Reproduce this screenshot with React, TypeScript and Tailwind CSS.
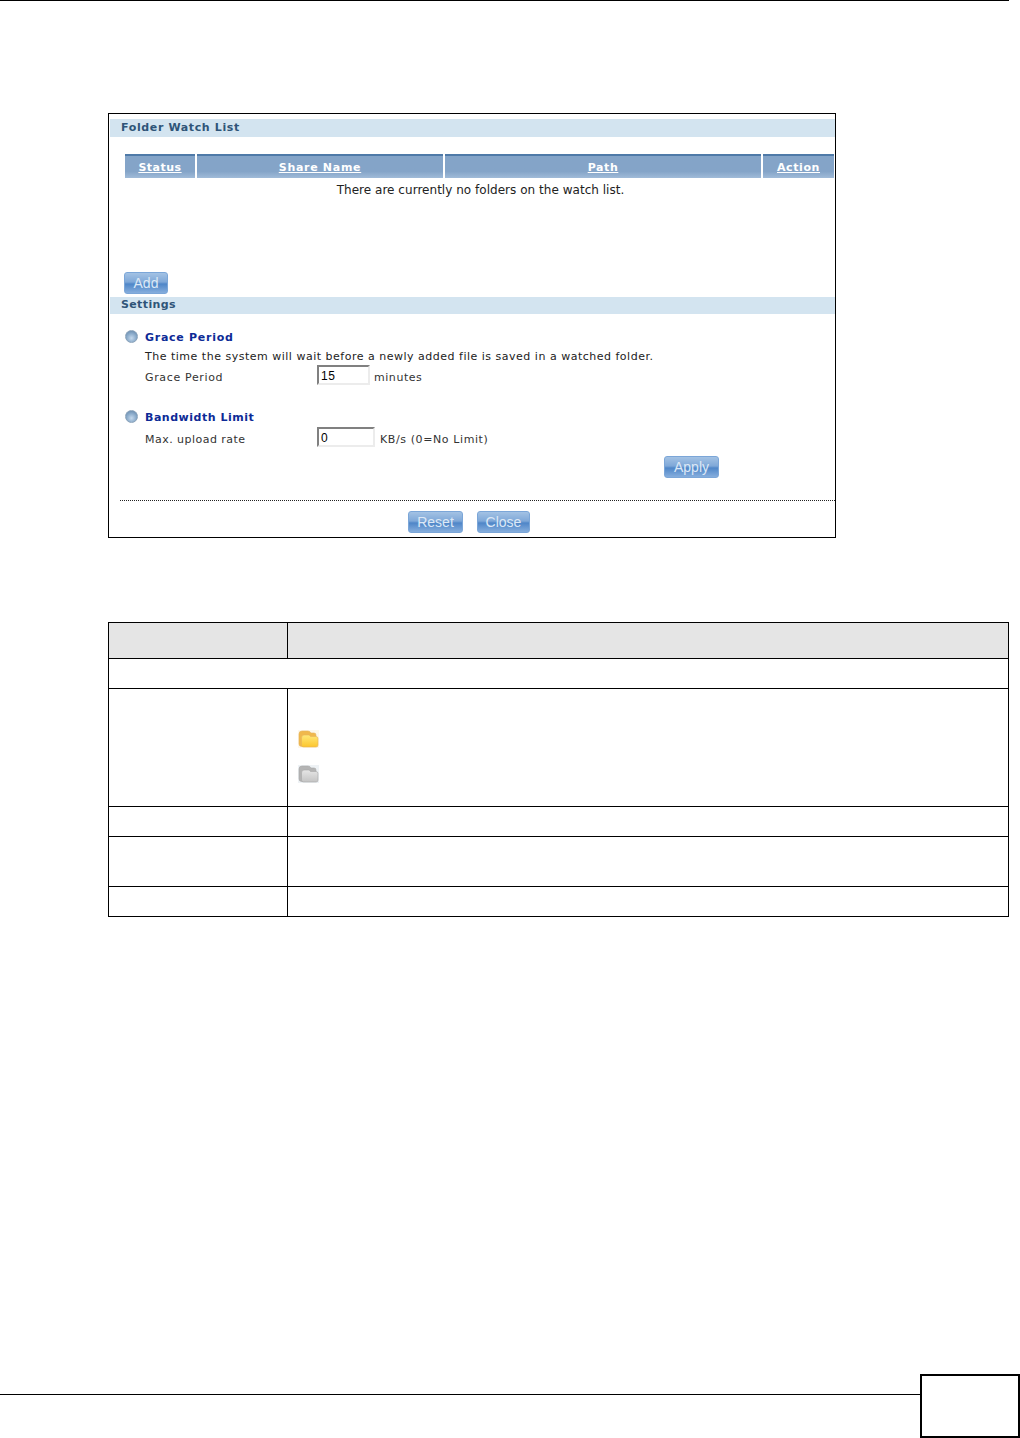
function Section({ title, className }: { title: string; className: string }) {
  return (
    <div className={`ml-px flex h-[18px] items-center bg-[#d3e4f0] pl-[11px] text-[11px] font-bold text-[#2f5478] ${className}`}>
      {title}
    </div>
  );
}

function HeadCell({ label, className }: { label: string; className: string }) {
  return (
    <div className={`flex h-[24px] items-center justify-center border-t-2 border-[#4f7aa8] bg-gradient-to-b from-[#84a4c8] from-70% to-[#a0bbd8] pt-[2px] text-[11px] font-bold text-white underline ${className}`}>
      {label}
    </div>
  );
}

function BlueButton({ label, className }: { label: string; className: string }) {
  return (
    <button className={`flex h-[22px] items-center justify-center rounded-[3px] border border-[#7ba6d8] bg-[linear-gradient(#a3c2e4_0%,#7fa8d8_45%,#4f86c8_55%,#86aedd_100%)] font-['Liberation_Sans',sans-serif] text-[14px] text-[#dce8f6] ${className}`}>
      {label}
    </button>
  );
}

function Bullet() {
  return (
    <span className="mb-[4px] h-[13px] w-[13px] shrink-0 rounded-full border border-[#8ba3ba] bg-[radial-gradient(circle_at_50%_65%,#c4d8ec_0%,#87a8c8_55%,#5f80a2_100%)]" />
  );
}

function Field({ value, className }: { value: string; className: string }) {
  return (
    <div className={`h-[20px] border-2 border-t-[#808080] border-r-[#ececec] border-b-[#ececec] border-l-[#808080] pl-[2px] font-['Liberation_Sans',sans-serif] text-[12px] leading-[19px] text-black ${className}`}>
      {value}
    </div>
  );
}

function Folder({ id, back, top, bottom, edge, bg }: { id: string; back: string; top: string; bottom: string; edge: string; bg: string }) {
  return (
    <svg width="21" height="18" viewBox="0 0 21 18" className="block">
      <defs>
        <linearGradient id={id} x1="0" y1="0" x2="0" y2="1">
          <stop offset="0" stopColor={top} />
          <stop offset="1" stopColor={bottom} />
        </linearGradient>
      </defs>
      <rect width="21" height="18" fill={bg} />
      <path d="M1 4 Q1 1 4 1 H10 Q12 1 13 3 H16 Q18 3 18 5 V8 H6 V16.5 H4 Q1 16.5 1 14 Z" fill={back} stroke={edge} strokeWidth="0.6" />
      <path d="M3.5 8 Q3.5 5 6 5 H10.5 Q12 5 12.5 6.5 H18 Q20 6.5 20 8.5 V15 Q20 17 18 17 H5.5 Q3.5 17 3.5 15 Z" fill={`url(#${id})`} stroke={edge} strokeWidth="0.6" />
    </svg>
  );
}

function Row({ h, children }: { h: string; children?: React.ReactNode }) {
  return (
    <div className={`flex border-b border-black ${h}`}>
      <div className="w-[179px] shrink-0 border-r border-black" />
      <div className="min-w-0 flex-1">{children}</div>
    </div>
  );
}

export default function App() {
  return (
    <main className="flex h-[1438px] w-[1020px] flex-col overflow-hidden bg-white font-['DejaVu_Sans',sans-serif]">
      <div className="h-px w-[1009px] bg-black" />

      {/* screenshot of the watch list page */}
      <div className="ml-[108px] mt-[112px] h-[426px] w-[728px] border border-black pt-[5px] text-[#222]">
        <Section title="Folder Watch List" className="tracking-[0.63px]" />
        <div className="ml-[16px] mt-[17px] flex gap-[2px]">
          <HeadCell label="Status" className="w-[70px] tracking-[0.5px]" />
          <HeadCell label="Share Name" className="w-[246px] tracking-[0.7px]" />
          <HeadCell label="Path" className="w-[316px] tracking-[0.6px]" />
          <HeadCell label="Action" className="w-[71px] tracking-[0.6px]" />
        </div>
        <p className="ml-[16px] mt-[4px] w-[709px] pl-[2px] text-center text-[12px] leading-[16px] tracking-[0.03px]">
          There are currently no folders on the watch list.
        </p>
        <BlueButton label="Add" className="ml-[15px] mt-[74px] w-[44px]" />
        <Section title="Settings" className="mt-[3px] !h-[17px] tracking-[0.37px]" />

        <div className="ml-[16px] mt-[16px] flex items-center gap-[7px] text-[11px] font-bold tracking-[0.73px] text-[#0d2a96]">
          <Bullet />
          Grace Period
        </div>
        <p className="ml-[36px] mt-[2px] text-[11px] leading-[16px] tracking-[0.505px]">
          The time the system will wait before a newly added file is saved in a watched folder.
        </p>
        <div className="ml-[36px] flex h-[20px] items-center text-[11px] tracking-[0.65px] text-[#333]">
          <span className="mt-[6px] w-[172px]">Grace Period</span>
          <Field value="15" className="w-[53px]" />
          <span className="ml-[4px] mt-[6px] tracking-[0.55px]">minutes</span>
        </div>

        <div className="ml-[16px] mt-[25px] flex items-center gap-[7px] text-[11px] font-bold tracking-[0.52px] text-[#0d2a96]">
          <Bullet />
          Bandwidth Limit
        </div>
        <div className="ml-[36px] flex h-[20px] items-center text-[11px] tracking-[0.47px] text-[#333]">
          <span className="mt-[6px] w-[172px]">Max. upload rate</span>
          <Field value="0" className="w-[58px]" />
          <span className="ml-[5px] mt-[6px] tracking-[0.6px]">KB/s (0=No Limit)</span>
        </div>
        <div className="mt-[9px] flex justify-end pr-[116px]">
          <BlueButton label="Apply" className="w-[55px]" />
        </div>
        <div className="ml-[11px] mt-[22px] border-t border-dotted border-[#222]" />
        <div className="mt-[10px] flex">
          <BlueButton label="Reset" className="ml-[299px] w-[55px]" />
          <BlueButton label="Close" className="ml-[14px] w-[53px]" />
        </div>
      </div>

      {/* field description table, empty cells as in the source */}
      <div className="ml-[108px] mt-[84px] w-[901px] border border-b-0 border-black">
        <div className="flex h-[36px] border-b border-black bg-[#e5e5e5]">
          <div className="w-[179px] shrink-0 border-r border-black" />
        </div>
        <div className="h-[30px] border-b border-black" />
        <Row h="h-[118px]">
          <div className="ml-[10px] mt-[41px]">
            <Folder id="open" back="#f0b84c" top="#ffe878" bottom="#fcc62e" edge="#e8b45a" bg="#fdf8ec" />
          </div>
          <div className="ml-[10px] mt-[17px]">
            <Folder id="off" back="#b4b4b4" top="#e6e6e6" bottom="#c4c4c4" edge="#a8a8a8" bg="#eef2f5" />
          </div>
        </Row>
        <Row h="h-[30px]" />
        <Row h="h-[50px]" />
        <Row h="h-[30px]" />
      </div>

      {/* page footer */}
      <div className="mt-[457px] flex h-[64px] items-start">
        <div className="mt-[20px] h-px w-[920px] bg-black" />
        <div className="h-[64px] w-[100px] border-2 border-black" />
      </div>
    </main>
  );
}
